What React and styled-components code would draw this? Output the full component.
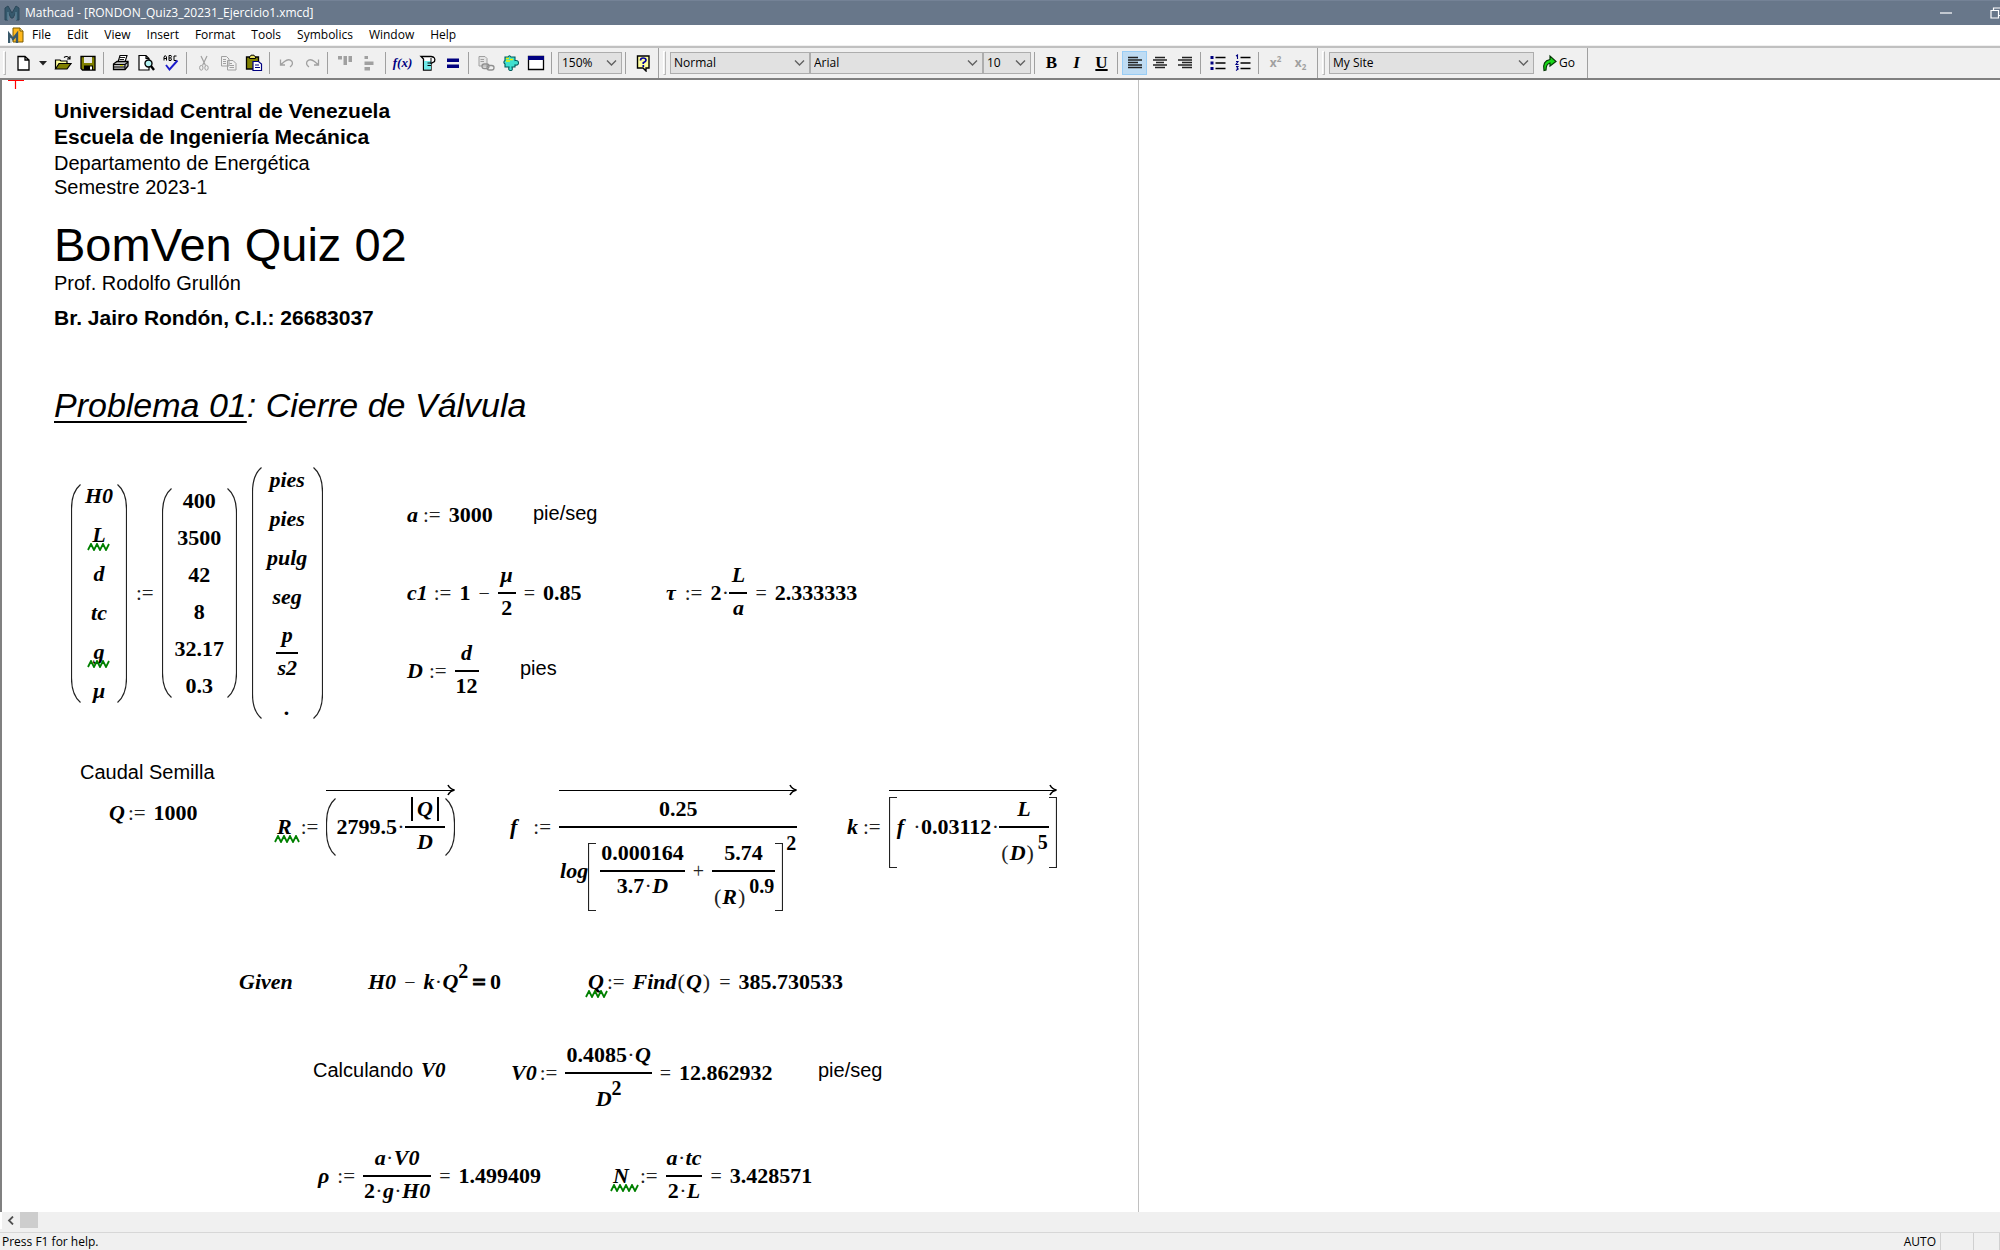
import React from "react";
import styled, { createGlobalStyle, css } from "styled-components";

const UI_FONT = `"Open Sans", "Noto Sans", sans-serif`;
const TEXT_FONT = `"Liberation Sans", Arial, sans-serif`;
const MATH_FONT = `"Liberation Serif", "Times New Roman", serif`;

const GlobalStyle = createGlobalStyle`
  * { box-sizing: border-box; }
  body { margin: 0; background: #fff; color: #000; }
`;

/* ---------- window frame ---------- */

const Window = styled.div`
  display: flex;
  flex-direction: column;
  height: 100vh;
  overflow: hidden;
  font: 12px/16px ${UI_FONT};
`;

const TitleBar = styled.header`
  display: flex;
  align-items: center;
  gap: 5px;
  height: 25px;
  padding-left: 4px;
  background: #68778a;
  color: #fff;
  border-top: 1px solid #748296;
  flex: none;
`;

const Title = styled.h1`
  margin: 0;
  font: 400 12px/16px ${UI_FONT};
  flex: 1;
`;

const Controls = styled.div`
  display: flex;
  gap: 26px;
  margin-right: -8px;
`;

const ControlButton = styled.button`
  display: grid;
  place-items: center;
  width: 24px;
  height: 24px;
  padding: 0;
  border: 0;
  background: none;
  color: #fff;
`;

const MenuBar = styled.nav`
  display: flex;
  align-items: center;
  height: 21px;
  padding-left: 8px;
  background: #fff;
  border-bottom: 1px solid #f0f0f0;
  flex: none;
`;

const MenuButton = styled.button`
  margin: 0;
  padding: 0 8px;
  border: 0;
  background: none;
  color: #000;
  font: 12px/20px ${UI_FONT};
`;

const ToolBar = styled.div`
  display: flex;
  align-items: stretch;
  height: 34px;
  background: #f0f0f0;
  border-top: 2px solid #c0c0c0;
  border-bottom: 2px solid #808080;
  flex: none;
`;

const Band = styled.div`
  display: flex;
  align-items: center;
  padding-right: ${(p) => p.$end || 0}px;
  border-right: 1px solid #a0a0a0;
`;

const Grip = styled.span`
  width: 3px;
  height: 24px;
  margin: 0 4px 0 ${(p) => p.$before || 3}px;
  border: 1px solid #b8b8b8;
  border-left-color: #fff;
  border-top-color: #fff;
`;

const ToolButton = styled.button`
  display: grid;
  place-items: center;
  width: ${(p) => p.$width || 25}px;
  height: 24px;
  padding: 0;
  border: 1px solid ${(p) => (p.$on ? "#99cdf5" : "transparent")};
  background: ${(p) => (p.$on ? "#bfdcf3" : "none")};
  color: ${(p) => (p.disabled ? "#a0a0a0" : "#000")};
`;

const GoButton = styled.button`
  display: flex;
  align-items: center;
  gap: 2px;
  padding: 0 12px 0 8px;
  border: 0;
  background: none;
  color: #000;
  font: 12px/16px ${UI_FONT};
`;

const Divider = styled.span`
  width: 8px;
  height: 22px;
  flex: none;
  &::before {
    content: "";
    display: block;
    width: 1px;
    height: 100%;
    margin-left: 3px;
    background: #a0a0a0;
  }
`;

const Picker = styled.label`
  display: grid;
  align-items: center;
  width: ${(p) => p.$width}px;
  height: 22px;
  margin-left: ${(p) => p.$before || 0}px;
  background: #e1e1e1;
  border: 1px solid #adadad;
  & > * { grid-area: 1 / 1; }
  & > svg { justify-self: end; margin-right: 4px; pointer-events: none; }
`;

const PickerSelect = styled.select`
  appearance: none;
  width: 100%;
  height: 20px;
  padding: 0 20px 0 3px;
  border: 0;
  border-radius: 0;
  background: none;
  color: #000;
  font: 12px/20px ${UI_FONT};
`;

const FormatGlyph = styled.span`
  font: 17px/20px ${MATH_FONT};
  font-weight: 700;
  font-style: ${(p) => (p.$italic ? "italic" : "normal")};
  text-decoration: ${(p) => (p.$underline ? "underline 2px" : "none")};
`;

const ScriptGlyph = styled.span`
  font: 700 12px/16px ${UI_FONT};
  color: #a0a0a0;
  & > * { font-size: 8px; line-height: 0; }
`;

const Fx = styled.span`
  font: italic 700 13px/16px ${MATH_FONT};
  color: #000080;
`;

const ScrollBar = styled.div`
  display: flex;
  height: 17px;
  margin-left: 2px;
  background: #f0f0f0;
  flex: none;
`;

const ScrollArrow = styled.button`
  display: grid;
  place-items: center;
  width: 18px;
  padding: 0;
  border: 0;
  background: none;
`;

const ScrollThumb = styled.span`
  width: 18px;
  height: 16px;
  background: #cdcdcd;
`;

const StatusBar = styled.footer`
  display: flex;
  align-items: flex-end;
  height: 21px;
  padding-left: 2px;
  background: #f0f0f0;
  border-top: 3px solid #f0f0f0;
  box-shadow: inset 0 1px #d7d7d7;
  line-height: 17px;
  flex: none;
`;

const StatusMessage = styled.span`
  flex: 1;
`;

const StatusCell = styled.span`
  width: ${(p) => p.$width}px;
  height: 17px;
  padding-right: 4px;
  text-align: right;
  border-right: 1px solid #d0d0d0;
`;

/* ---------- worksheet ---------- */

const Worksheet = styled.main`
  position: relative;
  flex: 1;
  overflow: hidden;
  border-left: 2px solid #808080;
  background: #fff;
`;

const PageEdge = styled.div`
  width: 1137px;
  height: 100%;
  padding: 18px 0 0 52px;
  border-right: 1px solid #c0c0c0;
`;

const Crosshair = styled.svg`
  position: absolute;
  left: 6px;
  top: 0;
`;

const Line = styled.p`
  margin: 0;
  font: ${(p) => (p.$bold ? 700 : 400)} ${(p) => (p.$large ? 21 : 20)}px/${(p) => (p.$tight ? 22 : 26)}px ${TEXT_FONT};
`;

const DocTitle = styled.h2`
  margin: 22px 0 0;
  font: 400 47px/50px ${TEXT_FONT};
`;

const Author = styled(Line)`
  margin-top: 9px;
`;

const Heading = styled.h3`
  margin: 54px 0 0;
  font: italic 400 34px/40px ${TEXT_FONT};
`;

const Underlined = styled.span`
  text-decoration: underline 2px;
  text-underline-offset: 4px;
`;

/* A region is dropped anywhere on the sheet; y is its math axis. */
const Region = styled.div`
  position: absolute;
  left: ${(p) => p.$x}px;
  top: ${(p) => p.$y}px;
  height: 0;
  display: flex;
  align-items: center;
  white-space: pre;
  font: 700 22px/24px ${MATH_FONT};
`;

const Note = styled(Region)`
  font: 400 20px/24px ${TEXT_FONT};
`;

const NoteVar = styled.i`
  margin-left: 8px;
  font: italic 700 21px/24px ${MATH_FONT};
`;

const V = styled.i`
  position: relative;
  font-style: italic;
  margin: ${(p) => (p.$loose ? "0 9px 0 0" : "0")};
`;

const thin = css`
  font-weight: 400;
  color: #222;
`;

const AssignSign = styled.span`
  ${thin}
  font-size: 21px;
  margin: 0 8px 0 ${(p) => (p.$before === undefined ? 6 : p.$before)}px;
`;

const Op = styled.span`
  ${thin}
  font-size: 20px;
  margin: 0 8px;
`;

const BoolEq = styled.span`
  margin: 0 4px;
  font-size: 24px;
  -webkit-text-stroke: 1px #000;
`;

const Paren = styled.span`
  ${thin}
  margin: 0 1px;
`;

const DotSign = styled.span`
  ${thin}
  width: 8px;
  text-align: center;
`;

const Frac = styled.span`
  display: inline-grid;
  grid-template-rows: 1fr 2px 1fr;
  min-width: 18px;
  justify-items: center;
`;

const Num = styled.span`
  display: flex;
  align-items: center;
  align-self: end;
  padding: 0 1px 5px;
`;

const Bar = styled.span`
  justify-self: stretch;
  background: #000;
`;

const Den = styled.span`
  display: flex;
  align-items: center;
  align-self: start;
  padding: ${(p) => p.$drop || 2}px 1px 0;
`;

const Abs = styled.span`
  display: flex;
  padding: 0 4px;
  margin: 0 5px;
  border: solid #000;
  border-width: 0 2px;
`;

const Power = styled.span`
  display: inline-flex;
  align-items: flex-start;
`;

const Exp = styled.span`
  margin: ${(p) => (p.$corner ? 0 : -11)}px 0 0 ${(p) => p.$gap || 0}px;
  font-size: 20px;
`;

const Matrix = styled.span`
  display: flex;
  align-items: center;
  margin-left: ${(p) => p.$before || 0}px;
`;

const Column = styled.span`
  display: grid;
  width: ${(p) => p.$width}px;
  grid-auto-rows: ${(p) => p.$row}px;
  ${(p) => p.$rows && `grid-template-rows: ${p.$rows};`}
  place-items: center;
`;

const Vector = styled.span`
  position: relative;
  display: flex;
  align-items: center;
`;

const ArrowOver = styled.span`
  position: absolute;
  left: 0;
  right: 0;
  top: calc(50% - 43px);
  display: flex;
  align-items: center;
  height: 12px;
  &::before {
    content: "";
    flex: 1;
    height: 1px;
    margin-right: -8px;
    background: #000;
  }
`;

const Squiggle = styled.svg`
  position: absolute;
  left: ${(p) => (p.$centered ? `calc(50% - ${p.width / 2}px)` : "-3px")};
  top: 20px;
`;

const Mark = styled.svg`
  flex: none;
  margin-top: ${(p) => p.$drop || 0}px;
`;

const Wavy = ({ width = 25, centered }) => {
  const pts = [];
  for (let x = 1, i = 0; x < width; x += 3, i++) pts.push(`${x},${i % 2 ? 1 : 7}`);
  return (
    <Squiggle $centered={centered} width={width} height="8" viewBox={`0 0 ${width} 8`} aria-hidden="true">
      <polyline points={pts.join(" ")} fill="none" stroke="#008000" strokeWidth="1.8" />
    </Squiggle>
  );
};

const Curve = ({ h, right }) => (
  <Mark width="10" height={h} viewBox={`0 0 10 ${h}`} aria-hidden="true">
    <path
      d={
        right
          ? `M0.5,0.5 Q9.5,8 9.5,25 V${h - 25} Q9.5,${h - 8} 0.5,${h - 0.5}`
          : `M9.5,0.5 Q0.5,8 0.5,25 V${h - 25} Q0.5,${h - 8} 9.5,${h - 0.5}`
      }
      fill="none"
      stroke="#222"
      strokeWidth="1.2"
    />
  </Mark>
);

const Square = ({ h, right, drop }) => (
  <Mark width="8" height={h} viewBox={`0 0 8 ${h}`} $drop={drop} aria-hidden="true">
    <path
      d={right ? `M0,0.5 H7.5 V${h - 0.5} H0` : `M8,0.5 H0.5 V${h - 0.5} H8`}
      fill="none"
      stroke="#222"
      strokeWidth="1.2"
    />
  </Mark>
);

const Vec = ({ children }) => (
  <Vector>
    {children}
    <ArrowOver>
      <svg width="9" height="12" viewBox="0 0 9 12" aria-hidden="true">
        <path d="M2,1 Q4,5 8.5,6 Q4,7 2,11" fill="none" stroke="#000" strokeWidth="1.6" />
      </svg>
    </ArrowOver>
  </Vector>
);

const Fraction = ({ top, bottom, drop }) => (
  <Frac>
    <Num>{top}</Num>
    <Bar />
    <Den $drop={drop}>{bottom}</Den>
  </Frac>
);

const Assign = ({ before }) => <AssignSign $before={before}>:=</AssignSign>;
const Dot = () => <DotSign>·</DotSign>;
const Eq = () => <Op>=</Op>;

/* ---------- icons ---------- */

const Svg = ({ children, w = 18, h = 18 }) => (
  <svg width={w} height={h} viewBox={`0 0 ${w} ${h}`} fill="none" stroke="currentColor" aria-hidden="true">
    {children}
  </svg>
);

const Chevron = () => (
  <Svg w={11} h={8}><path d="M1,1.5 L5.5,6 L10,1.5" stroke="#606060" strokeWidth="1.4" /></Svg>
);

const AppMark = () => (
  <Svg w={16} h={16}>
    <path d="M1,3 L4,1 L8,8 L12,1 L15,3 V15 H12 V7 L9,13 H7 L4,7 V15 H1 Z" fill="#35586c" stroke="#2b4759" />
    <path d="M4,7 V15 M12,7 V15" stroke="#6f9bb0" />
  </Svg>
);

const DocMark = () => (
  <Svg w={16} h={17}>
    <path d="M5,1 H12 L15,4 V15 H5 Z" fill="#ffb81c" stroke="#7a5a00" />
    <path d="M12,1 V4 H15" stroke="#7a5a00" fill="#ffe9a8" />
    <path d="M1,16 V7 L5,12 L9,7 V16" stroke="#39596b" strokeWidth="2.4" />
    <path d="M3,16 V11" stroke="#9fc0d0" />
  </Svg>
);

const icons = {
  New: <Svg><path d="M4,2.5 H11 L15,6 V16 H4 Z M11,2.5 V6 H15" fill="#fff" strokeWidth="1.3" /></Svg>,
  Open: (
    <Svg>
      <path d="M1.5,15 V6 H6 L7,7 H13 V9" fill="#ffff9c" strokeWidth="1.2" />
      <path d="M1.5,15 L5,9.5 H17 L13,15 Z" fill="#808000" strokeWidth="1.2" />
      <path d="M10,3.5 Q13,1 15.5,4.5 M16,2 V5 H13" strokeWidth="1.1" />
    </Svg>
  ),
  Save: (
    <Svg>
      <path d="M2,2.5 H16 V16 H3.5 L2,14.5 Z" fill="#808000" strokeWidth="1.3" />
      <path d="M5,3 H13 V9 H5 Z" fill="#e8e8e8" stroke="none" />
      <path d="M5,11.5 H14 V16 H5 Z" fill="#000" stroke="none" />
      <path d="M11,12.5 H13 V15.5 H11 Z" fill="#fff" stroke="none" />
    </Svg>
  ),
  Print: (
    <Svg>
      <path d="M6,8 L8,1.5 H15 L13,8" fill="#fff" strokeWidth="1.1" />
      <path d="M8,3.5 H13 M7.5,5.5 H12" strokeWidth="0.9" />
      <path d="M1.5,10 L5,7.5 H16 V12 L13,15.5 H1.5 Z" fill="#c0c0c0" strokeWidth="1.3" />
      <path d="M1.5,10.5 H13 V15.5 M13,10.5 L16,8 M2,13 H13" strokeWidth="1.1" />
      <path d="M8,11.5 H11" stroke="#d8d800" />
    </Svg>
  ),
  "Print Preview": (
    <Svg>
      <path d="M2,1.5 H9 L12,4.5 V16 H2 Z M9,1.5 V4.5 H12" fill="#fff" strokeWidth="1.2" />
      <circle cx="11.5" cy="9.5" r="3.5" fill="#b5f2f2" strokeWidth="1.4" />
      <path d="M14,12 L17,16" strokeWidth="2.4" />
    </Svg>
  ),
  "Check Spelling": (
    <Svg>
      <path d="M2,6.5 V3 L3.2,1.5 L4.5,3 V6.5 M2,4.5 H4.5 M7,1.5 V6.5 H9 L9.5,5 L8.5,4 L9.5,2.7 L9,1.5 Z M7,4 H8.5 M14.5,2 H12 V6.5 H14.5" strokeWidth="1" />
      <path d="M4,11 L7.5,15.5 L15.5,6.5" stroke="#1c1ccc" strokeWidth="1.9" />
    </Svg>
  ),
  Cut: (
    <Svg>
      <path d="M6,2 L10.5,11.5 M12,2 L7.5,11.5" stroke="#a0a0a0" strokeWidth="1.2" />
      <ellipse cx="6.3" cy="13.8" rx="1.7" ry="2.4" stroke="#a0a0a0" /><ellipse cx="11.5" cy="13.8" rx="1.7" ry="2.4" stroke="#a0a0a0" />
    </Svg>
  ),
  Copy: (
    <Svg>
      <path d="M1.5,2.5 H6.5 L9,5 V12 H1.5 Z M7.5,6.5 H13 L16,9.5 V16 H7.5 Z" fill="#f0f0f0" stroke="#a0a0a0" />
      <path d="M3,5.5 H6 M3,7.5 H6 M3,9.5 H6 M9.5,9.5 H12 M9.5,11.5 H14 M9.5,13.5 H14" stroke="#a0a0a0" />
    </Svg>
  ),
  Paste: (
    <Svg>
      <path d="M1.5,3 H13.5 V15 H1.5 Z" fill="#808000" strokeWidth="1.3" />
      <path d="M4.5,4.5 V3 L6,1.2 H9 L10.5,3 V4.5 Z" fill="#e8e060" />
      <path d="M8,7.5 H13.5 L16.5,10 V16.5 H8 Z" fill="#fff" stroke="#000080" strokeWidth="1.2" />
      <path d="M10,11 H14 M10,13.5 H15" stroke="#000080" />
    </Svg>
  ),
  Undo: <Svg><path d="M2.5,5.5 V11 H7 M3,10.5 L6.5,7.5 Q11,4 14,7.5 Q15.5,10.5 12,13" stroke="#a0a0a0" strokeWidth="1.3" /></Svg>,
  Redo: <Svg><path d="M15.5,5.5 V11 H11 M15,10.5 L11.5,7.5 Q7,4 4,7.5 Q2.5,10.5 6,13" stroke="#a0a0a0" strokeWidth="1.3" /></Svg>,
  "Align Across": <Svg><path d="M2,2 H6 V5.5 H2 Z M7.5,2 H11 V11 H7.5 Z M12.5,2 H16 V8 H12.5 Z" fill="#a0a0a0" stroke="none" /></Svg>,
  "Align Down": <Svg><path d="M3.5,2 H7 V5 H3.5 Z M3.5,7.5 H12.5 V11 H3.5 Z M3.5,13 H9 V16.5 H3.5 Z" fill="#a0a0a0" stroke="none" /></Svg>,
  "Insert Unit": (
    <Svg>
      <path d="M2,2.5 H12 Q17,3 15.5,7.5 L12,9.5 V16 H4.5 V5 Z" fill="#fff" strokeWidth="1.3" />
      <path d="M5,7 H12 V15.5 H5 Z" fill="#70e8e8" stroke="none" />
      <path d="M8.5,9 H12 M8.5,11.5 H12 M12,4 V10" />
    </Svg>
  ),
  Calculate: <Svg><path d="M3,4.5 H15 V8 H3 Z M3,10.5 H15 V14 H3 Z" fill="#000080" stroke="none" /></Svg>,
  "Insert Hyperlink": (
    <Svg>
      <path d="M2,2.5 H8 L10,4.5 V12 H2 Z" stroke="#a0a0a0" fill="#e4e4e4" />
      <path d="M3.5,5.5 H7 M3.5,7.5 H7" stroke="#a0a0a0" />
      <rect x="5" y="10" width="7" height="4.5" rx="2.2" stroke="#909090" strokeWidth="1.3" />
      <rect x="10" y="11.5" width="7" height="4.5" rx="2.2" stroke="#909090" strokeWidth="1.3" />
    </Svg>
  ),
  "Insert Component": (
    <Svg>
      <path d="M3,3 H6 Q7.5,0.5 9,3 H13 V6.5 Q16.5,6 16.5,9 Q16.5,11.5 13,11 V13 H10 Q11,17 8.5,16.5 Q6,16.5 7,13 H3 V10 Q0.8,8 3,6.5 Z" fill="#3fe0d0" stroke="#005a5a" strokeWidth="1.1" />
      <path d="M4,4.5 H7 M4,7 H8 M8,5.5 H11" stroke="#f0f000" strokeWidth="1.3" />
    </Svg>
  ),
  "Resource Window": (
    <Svg>
      <path d="M1.5,2.5 H16.5 V15.5 H1.5 Z" fill="#fff" strokeWidth="1.3" />
      <path d="M1,2 H17 V6 H1 Z" fill="#000080" stroke="none" />
    </Svg>
  ),
  "Align Left": <Svg><path d="M2,3.5 H12 M2,6 H16 M2,8.5 H12 M2,11 H16 M2,13.5 H16" stroke="#222" strokeWidth="1.5" /></Svg>,
  Center: <Svg><path d="M4,3.5 H14 M2,6 H16 M5,8.5 H13 M2,11 H16 M4,13.5 H14" stroke="#222" strokeWidth="1.5" /></Svg>,
  "Align Right": <Svg><path d="M6,3.5 H16 M2,6 H16 M6,8.5 H16 M2,11 H16 M6,13.5 H16" stroke="#222" strokeWidth="1.5" /></Svg>,
  Bullets: (
    <Svg>
      <path d="M1.5,2 H4.5 V5 H1.5 Z M1.5,7.5 H4.5 V10.5 H1.5 Z M1.5,13 H4.5 V16 H1.5 Z" fill="#000080" stroke="none" />
      <path d="M6.5,3.5 H16.5 M6.5,9 H16.5 M6.5,14.5 H16.5" strokeWidth="1.3" />
    </Svg>
  ),
  Numbering: (
    <Svg>
      <path d="M2,2 L3.5,1 V5 M2,7.5 H4 L2,10.5 H4.5 M2,12.5 H4 L3,14 L4.2,15 L2,16.5" stroke="#000080" strokeWidth="1.1" />
      <path d="M6.5,3.5 H16.5 M6.5,9 H16.5 M6.5,14.5 H16.5" strokeWidth="1.3" />
    </Svg>
  ),
};

const HelpIcon = () => (
  <Svg>
    <path d="M3.5,2 H15 V14 H12 V17 L9,14 H3.5 Z" fill="#ffff9c" strokeWidth="1.4" />
    <path d="M6.5,6.5 Q6.5,4 9,4 Q12,4 12,6.3 Q12,7.5 9.3,8.7 V10 M9.3,11 V13" stroke="#0000a0" strokeWidth="1.7" />
  </Svg>
);

const GoIcon = () => (
  <Svg w={15} h={18}>
    <path d="M2,16.5 Q0,7 8,5.5 V2 L14,7.5 L8,12 V9 Q4,10 4,16 Z" fill="#18d818" stroke="#073807" strokeWidth="1.2" />
  </Svg>
);

const Tool = ({ name, on, off }) => (
  <ToolButton type="button" aria-label={name} title={name} $on={on} disabled={off}>
    {icons[name]}
  </ToolButton>
);

const Choice = ({ label, width, value, before }) => (
  <Picker $width={width} $before={before}>
    <PickerSelect aria-label={label} defaultValue={value}>
      <option>{value}</option>
    </PickerSelect>
    <Chevron />
  </Picker>
);

const menus = ["File", "Edit", "View", "Insert", "Format", "Tools", "Symbolics", "Window", "Help"];

export default function App() {
  return (
    <Window>
      <GlobalStyle />
      <TitleBar>
        <AppMark />
        <Title>Mathcad - [RONDON_Quiz3_20231_Ejercicio1.xmcd]</Title>
        <Controls>
          <ControlButton type="button" aria-label="Minimize">
            <Svg w={12} h={12}><path d="M0,6 H12" strokeWidth="1.2" /></Svg>
          </ControlButton>
          <ControlButton type="button" aria-label="Restore">
            <Svg w={12} h={12}><path d="M1,3.5 H8.5 V11 H1 Z M3.5,3 V1 H11 V8.5 H9" strokeWidth="1.2" /></Svg>
          </ControlButton>
        </Controls>
      </TitleBar>

      <MenuBar>
        <DocMark />
        {menus.map((m) => <MenuButton type="button" key={m}>{m}</MenuButton>)}
      </MenuBar>

      <ToolBar role="toolbar">
        <Band $end={3}>
          <Grip />
          <Tool name="New" />
          <ToolButton type="button" aria-label="New from template" $width={15}>
            <Svg w={8} h={5}><path d="M0,0 H8 L4,4.5 Z" fill="#222" stroke="none" /></Svg>
          </ToolButton>
          <Tool name="Open" /><Tool name="Save" />
          <Divider />
          <Tool name="Print" /><Tool name="Print Preview" /><Tool name="Check Spelling" />
          <Divider />
          <Tool name="Cut" off /><Tool name="Copy" off /><Tool name="Paste" />
          <Divider />
          <Tool name="Undo" off /><Tool name="Redo" off />
          <Divider />
          <Tool name="Align Across" off /><Tool name="Align Down" off />
          <Divider />
          <ToolButton type="button" aria-label="Insert Function"><Fx>f(x)</Fx></ToolButton>
          <Tool name="Insert Unit" /><Tool name="Calculate" />
          <Divider />
          <Tool name="Insert Hyperlink" off /><Tool name="Insert Component" /><Tool name="Resource Window" />
          <Divider />
          <Choice label="Zoom" width={64} value="150%" before={2} />
          <Divider />
          <ToolButton type="button" aria-label="Help"><HelpIcon /></ToolButton>
        </Band>
        <Band $end={4}>
          <Grip $before={4} />
          <Choice label="Style" width={140} value="Normal" />
          <Choice label="Font" width={173} value="Arial" />
          <Choice label="Font size" width={48} value="10" />
          <Divider />
          <ToolButton type="button" aria-label="Bold"><FormatGlyph>B</FormatGlyph></ToolButton>
          <ToolButton type="button" aria-label="Italic"><FormatGlyph $italic>I</FormatGlyph></ToolButton>
          <ToolButton type="button" aria-label="Underline"><FormatGlyph $underline>U</FormatGlyph></ToolButton>
          <Divider />
          <Tool name="Align Left" on /><Tool name="Center" /><Tool name="Align Right" />
          <Divider />
          <Tool name="Bullets" /><Tool name="Numbering" />
          <Divider />
          <ToolButton type="button" aria-label="Superscript" disabled><ScriptGlyph>x<sup>2</sup></ScriptGlyph></ToolButton>
          <ToolButton type="button" aria-label="Subscript" disabled><ScriptGlyph>x<sub>2</sub></ScriptGlyph></ToolButton>
        </Band>
        <Band>
          <Grip $before={4} />
          <Choice label="Address" width={205} value="My Site" />
          <GoButton type="button"><GoIcon />Go</GoButton>
        </Band>
      </ToolBar>

      <Worksheet>
        <PageEdge>
          <Line as="h2" $bold $large>Universidad Central de Venezuela</Line>
          <Line as="h2" $bold $large>Escuela de Ingeniería Mecánica</Line>
          <Line>Departamento de Energética</Line>
          <Line $tight>Semestre 2023-1</Line>
          <DocTitle>BomVen Quiz 02</DocTitle>
          <Line>Prof. Rodolfo Grullón</Line>
          <Author $bold $large>Br. Jairo Rondón, C.I.: 26683037</Author>
          <Heading><Underlined>Problema 01</Underlined>: Cierre de Válvula</Heading>
        </PageEdge>
        <Crosshair width="17" height="9" viewBox="0 0 17 9" aria-hidden="true">
          <path d="M0,0.5 H16 M7.5,0 V9" stroke="#f00" strokeWidth="1.2" />
        </Crosshair>

        <Region $x={69} $y={513}>
          <Matrix>
            <Curve h={219} />
            <Column $width={36} $row={39}>
              <V>H0</V><V>L<Wavy centered /></V><V>d</V><V>tc</V><V>g<Wavy centered /></V><V>μ</V>
            </Column>
            <Curve h={219} right />
          </Matrix>
          <Assign before={9} />
          <Matrix>
            <Curve h={210} />
            <Column $width={55} $row={37}>
              <span>400</span><span>3500</span><span>42</span><span>8</span><span>32.17</span><span>0.3</span>
            </Column>
            <Curve h={210} right />
          </Matrix>
          <Matrix $before={15}>
            <Curve h={252} />
            <Column $width={51} $rows="repeat(4, 39px) 74px 36px">
              <V>pies</V><V>pies</V><V>pulg</V><V>seg</V>
              <Fraction top={<V>p</V>} bottom={<V>s2</V>} />
              <V>.</V>
            </Column>
            <Curve h={252} right />
          </Matrix>
        </Region>

        <Region $x={405} $y={435}><V>a</V><Assign before={5} />3000</Region>
        <Note $x={531} $y={433}>pie/seg</Note>

        <Region $x={405} $y={513}>
          <V>c1</V><Assign />1<Op>−</Op><Fraction top={<V>μ</V>} bottom="2" /><Eq />0.85
        </Region>
        <Region $x={664} $y={513}>
          <V>τ</V><Assign before={9} />2<Dot /><Fraction top={<V>L</V>} bottom={<V>a</V>} /><Eq />2.333333
        </Region>

        <Region $x={405} $y={591}>
          <V>D</V><Assign /><Fraction top={<V>d</V>} bottom="12" />
        </Region>
        <Note $x={518} $y={588}>pies</Note>

        <Note $x={78} $y={692}>Caudal Semilla</Note>
        <Region $x={107} $y={733}><V>Q</V><Assign before={3} />1000</Region>

        <Region $x={275} $y={747}>
          <V>R<Wavy width={28} /></V><Assign before={9} />
          <Vec>
            <Curve h={58} />
            <span>2799.5</span><Dot />
            <Fraction top={<Abs><V>Q</V></Abs>} bottom={<V>D</V>} />
            <Curve h={58} right />
          </Vec>
        </Region>

        <Region $x={508} $y={747}>
          <V>f</V><Assign before={16} />
          <Vec>
            <Fraction
              top="0.25"
              drop={3}
              bottom={
                <>
                  <V>log</V>
                  <Square h={68} drop={12} />
                  <Matrix $before={4}>
                    <Fraction top="0.000164" bottom={<>3.7<Dot /><V>D</V></>} />
                    <Op>+</Op>
                    <Fraction
                      top="5.74"
                      drop={13}
                      bottom={<Power><Paren>(</Paren><V>R</V><Paren>)</Paren><Exp $gap={3}>0.9</Exp></Power>}
                    />
                  </Matrix>
                  <Power><Square h={68} drop={12} right /><Exp $corner $gap={3}>2</Exp></Power>
                </>
              }
            />
          </Vec>
        </Region>

        <Region $x={845} $y={747}>
          <V>k</V><Assign before={5} />
          <Vec>
            <Square h={71} drop={10} />
            <V $loose>f</V><Dot />0.03112<Dot />
            <Fraction
              top={<V>L</V>}
              drop={13}
              bottom={<Power><Paren>(</Paren><V>D</V><Paren>)</Paren><Exp $gap={3}>5</Exp></Power>}
            />
            <Square h={71} drop={10} right />
          </Vec>
        </Region>

        <Region $x={237} $y={902}><V>Given</V></Region>
        <Region $x={366} $y={902}>
          <V>H0</V><Op>−</Op><V>k</V><Dot /><Power><V>Q</V><Exp>2</Exp></Power><BoolEq>=</BoolEq>0
        </Region>
        <Region $x={586} $y={902}>
          <V>Q<Wavy /></V><Assign before={3} /><V>Find</V><Paren>(</Paren><V>Q</V><Paren>)</Paren><Eq />385.730533
        </Region>

        <Note $x={311} $y={990}>Calculando<NoteVar>V0</NoteVar></Note>
        <Region $x={509} $y={993}>
          <V>V0</V><Assign before={3} />
          <Fraction
            top={<>0.4085<Dot /><V>Q</V></>}
            drop={13}
            bottom={<Power><V>D</V><Exp>2</Exp></Power>}
          />
          <Eq />12.862932
        </Region>
        <Note $x={816} $y={990}>pie/seg</Note>

        <Region $x={316} $y={1096}>
          <V>ρ</V><Assign before={8} />
          <Fraction top={<><V>a</V><Dot /><V>V0</V></>} bottom={<>2<Dot /><V>g</V><Dot /><V>H0</V></>} />
          <Eq />1.499409
        </Region>
        <Region $x={611} $y={1096}>
          <V>N<Wavy width={31} /></V><Assign before={11} />
          <Fraction top={<><V>a</V><Dot /><V>tc</V></>} bottom={<>2<Dot /><V>L</V></>} />
          <Eq />3.428571
        </Region>
      </Worksheet>

      <ScrollBar>
        <ScrollArrow type="button" aria-label="Scroll left">
          <Svg w={8} h={9}><path d="M6,0.5 L2,4.5 L6,8.5" stroke="#505050" strokeWidth="1.8" /></Svg>
        </ScrollArrow>
        <ScrollThumb />
      </ScrollBar>
      <StatusBar>
        <StatusMessage>Press F1 for help.</StatusMessage>
        <StatusCell $width={60}>AUTO</StatusCell>
        <StatusCell $width={33} />
        <StatusCell $width={26} />
      </StatusBar>
    </Window>
  );
}
